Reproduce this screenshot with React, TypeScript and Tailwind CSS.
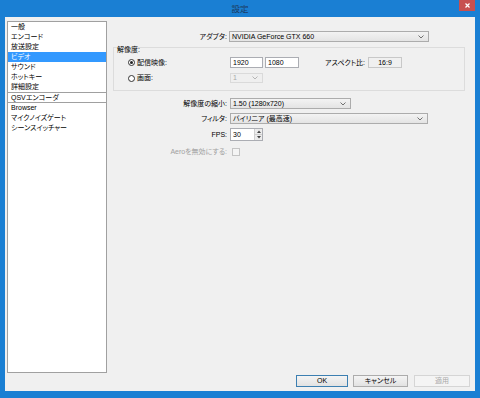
const jp = "[font-feature-settings:'palt']"

function Chevron({ muted }: { muted?: boolean }) {
  return (
    <svg width="6" height="4" viewBox="0 0 6 4" className="shrink-0">
      <path d="M0.5 0.5 L3 3 L5.5 0.5" fill="none" stroke={muted ? '#b5b5b5' : '#707070'} strokeWidth="1" />
    </svg>
  )
}

interface ComboProps {
  value: string
  className: string
  disabled?: boolean
}

function Combo({ value, className, disabled }: ComboProps) {
  return (
    <div
      className={`${className} flex items-center justify-between border pl-[2px] pr-[4px] ${
        disabled
          ? 'border-[#dadada] bg-[#efefef] text-[#a8a8a8]'
          : 'border-[#acacac] bg-gradient-to-b from-[#f3f3f3] to-[#e4e4e4] text-black'
      }`}
    >
      <span className={`whitespace-nowrap ${jp}`}>{value}</span>
      <Chevron muted={disabled} />
    </div>
  )
}

function Label({ children, muted }: { children: React.ReactNode; muted?: boolean }) {
  return (
    <div className={`w-[114px] shrink-0 text-right whitespace-nowrap ${jp} ${muted ? 'text-[#a0a0a0]' : 'text-black'}`}>
      {children}
    </div>
  )
}

function Radio({ checked }: { checked?: boolean }) {
  return (
    <div className="w-[7px] h-[7px] rounded-full border border-[#333] bg-white flex items-center justify-center shrink-0">
      {checked && <div className="w-[3px] h-[3px] rounded-full bg-[#222]" />}
    </div>
  )
}

const categories = ['一般', 'エンコード', '放送設定', 'ビデオ', 'サウンド', 'ホットキー', '詳細設定']
const plugins = ['Browser', 'マイクノイズゲート', 'シーンスイッチャー']

export default function App() {
  return (
    <div className="w-[480px] h-[398px] bg-[#1a7fd3] flex flex-col px-[5px] pb-[7px] font-['Liberation_Sans','Noto_Sans_CJK_JP',sans-serif] text-[7px] leading-[10px] select-none">
      {/* タイトルバー */}
      <div className="h-[17px] grid grid-cols-[1fr_auto_1fr] items-start -mx-[5px]">
        <div />
        <div className="text-[8.5px] leading-[17px] text-[#1d3a5e] font-['Noto_Sans_CJK_JP',sans-serif]">設定</div>
        <div className="flex justify-end pr-[5px]">
          <div className="w-[16px] h-[11px] bg-[#c75050] flex items-center justify-center">
            <svg width="5" height="5" viewBox="0 0 5 5">
              <path d="M0.5 0.5 L4.5 4.5 M4.5 0.5 L0.5 4.5" stroke="white" strokeWidth="1.2" />
            </svg>
          </div>
        </div>
      </div>

      {/* 本体 */}
      <div className="flex-1 bg-[#f0f0f0] flex flex-col pt-[4px] pl-[2px] pr-[5px] pb-[4px]">
        <div className="flex flex-1">
          {/* 左リスト */}
          <div className="w-[100px] h-[352px] border border-[#a0a0a0] bg-white">
            {categories.map((c) => (
              <div
                key={c}
                className={`h-[10px] pl-[3px] ${jp} ${c === 'ビデオ' ? 'bg-[#3399ff] text-white' : 'text-black'}`}
              >
                {c}
              </div>
            ))}
            <div className={`h-[11px] border-y border-[#a0a0a0] pl-[3px] leading-[9px] ${jp}`}>QSVエンコーダ</div>
            {plugins.map((p) => (
              <div key={p} className={`h-[10px] pl-[3px] ${jp}`}>
                {p}
              </div>
            ))}
          </div>

          {/* 右パネル */}
          <div className="ml-[6px] flex flex-col">
            <div className="mt-[10px] h-[11px] flex items-center">
              <Label>アダプタ:</Label>
              <Combo className="ml-[2px] w-[200px] h-full" value="NVIDIA GeForce GTX 660" />
            </div>

            {/* 解像度グループ */}
            <div className="mt-[5px] w-[352px] h-[44px] border border-[#dcdcdc] flex flex-col">
              <div className={`-mt-[2px] h-[8px] leading-[8px] pl-[3px] ${jp}`}>解像度:</div>
              <div className="mt-[3px] h-[11px] flex items-center">
                <div className="w-[116px] shrink-0 flex items-center pl-[14px] gap-[2px]">
                  <Radio checked />
                  <span className={jp}>配信映像:</span>
                </div>
                <div className="w-[33px] h-full border border-[#abadb3] bg-white pl-[2px] leading-[9px]">1920</div>
                <div className="ml-[2px] w-[34px] h-full border border-[#abadb3] bg-white pl-[2px] leading-[9px]">1080</div>
                <div className={`ml-[26px] w-[40px] text-right whitespace-nowrap ${jp}`}>アスペクト比:</div>
                <div className="ml-[3px] w-[34px] h-full border border-[#c8c8c8] bg-[#f0f0f0] text-center leading-[9px]">16:9</div>
              </div>
              <div className="mt-[5px] h-[10px] flex items-center">
                <div className="w-[116px] shrink-0 flex items-center pl-[14px] gap-[2px]">
                  <Radio />
                  <span className={jp}>画面:</span>
                </div>
                <Combo className="w-[33px] h-full" value="1" disabled />
              </div>
            </div>

            <div className="mt-[7px] h-[11px] flex items-center">
              <Label>解像度の縮小:</Label>
              <Combo className="ml-[3px] w-[121px] h-full" value="1.50 (1280x720)" />
            </div>
            <div className="mt-[4px] h-[11px] flex items-center">
              <Label>フィルタ:</Label>
              <Combo className="ml-[3px] w-[198px] h-full" value="バイリニア (最高速)" />
            </div>
            <div className="mt-[4px] h-[13px] flex items-center">
              <Label>FPS:</Label>
              <div className="ml-[3px] w-[33px] h-full border border-[#abadb3] bg-white flex">
                <div className="flex-1 pl-[2px] leading-[11px]">30</div>
                <div className="w-[8px] flex flex-col border-l border-[#d0d0d0]">
                  <div className="flex-1 flex items-center justify-center bg-[#ececec] border-b border-[#d0d0d0]">
                    <svg width="4" height="3" viewBox="0 0 4 3">
                      <path d="M0 3 L2 0.5 L4 3 Z" fill="#444" />
                    </svg>
                  </div>
                  <div className="flex-1 flex items-center justify-center bg-[#ececec]">
                    <svg width="4" height="3" viewBox="0 0 4 3">
                      <path d="M0 0 L2 2.5 L4 0 Z" fill="#444" />
                    </svg>
                  </div>
                </div>
              </div>
            </div>
            <div className="mt-[7px] h-[8px] flex items-center">
              <Label muted>Aeroを無効にする:</Label>
              <div className="ml-[5px] w-[8px] h-[8px] border border-[#c4c4c4] bg-[#f4f4f4]" />
            </div>
          </div>
        </div>

        {/* 下部ボタン */}
        <div className="h-[12px] mt-[2px] flex justify-end">
          <div className="w-[52px] h-full border border-[#3c7fb1] bg-gradient-to-b from-[#f4f4f4] to-[#e2e2e2] flex items-center justify-center">OK</div>
          <div className={`ml-[5px] w-[55px] h-full border border-[#acacac] bg-gradient-to-b from-[#f4f4f4] to-[#e2e2e2] flex items-center justify-center ${jp}`}>キャンセル</div>
          <div className="ml-[6px] w-[56px] h-full border border-[#d5d5d5] bg-[#f4f4f4] text-[#a8a8a8] flex items-center justify-center">適用</div>
        </div>
      </div>
    </div>
  )
}
